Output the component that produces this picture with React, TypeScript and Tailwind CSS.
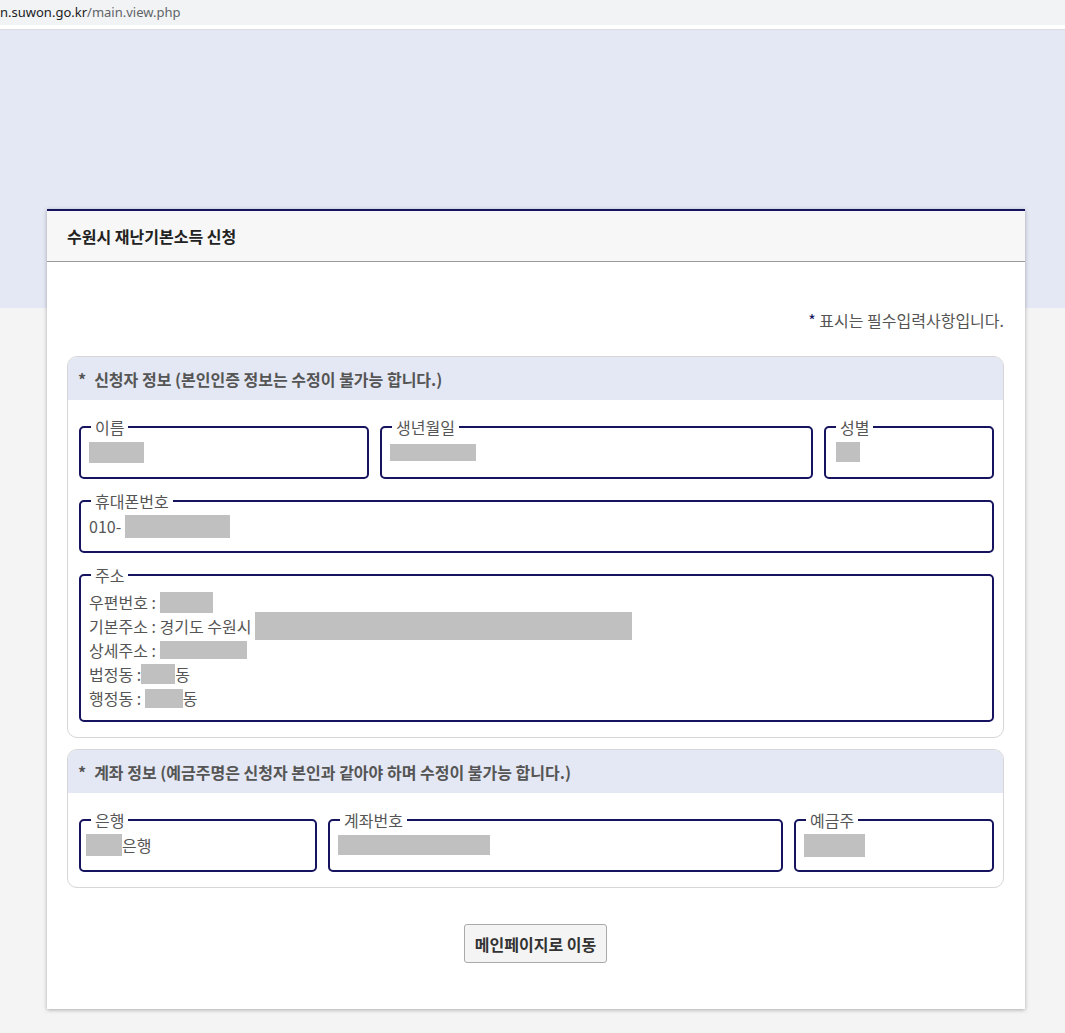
import type { ReactNode } from 'react';

const Blur = ({ w, h }: { w: number; h: number }) => (
  <span className="inline-block shrink-0 bg-[#c0c0c0] align-middle" style={{ width: w, height: h }} />
);

function Field({ label, children, className = '' }: { label: string; children: ReactNode; className?: string }) {
  return (
    <fieldset className={`rounded-[5px] border-2 border-[#16135f] px-[8px] ${className}`}>
      <legend className="ml-[2px] px-[4px] text-[16px] leading-[20px] text-[#555]">{label}</legend>
      {children}
    </fieldset>
  );
}

// single value line inside a field
const Value = ({ children }: { children: ReactNode }) => (
  <div className="flex h-[24px] items-center whitespace-pre text-[16px] text-[#555]">{children}</div>
);

function Section({ title, children }: { title: string; children: ReactNode }) {
  return (
    <div className="overflow-hidden rounded-[10px] border border-[#d6d6d6]">
      <div className="flex h-[43px] items-center bg-[#e4e8f4] pl-[10px] text-[16px] font-bold text-[#555]">
        <span className="mr-[8px]">*</span>
        {title}
      </div>
      <div className="pb-[15px] pl-[11px] pr-[9px] pt-[17px]">{children}</div>
    </div>
  );
}

export default function App() {
  return (
    <div className="min-h-screen bg-[#f4f4f4] font-['Noto_Sans_CJK_KR','Noto_Sans',sans-serif]">
      {/* Browser address bar */}
      <div className="flex h-[25px] items-center overflow-hidden bg-[#f1f3f4] font-['Noto_Sans',sans-serif] text-[13px]">
        <span className="text-[#202124]">n.suwon.go.kr</span>
        <span className="text-[#5f6368]">/main.view.php</span>
      </div>
      <div className="h-[4px] bg-white" />
      <div className="h-px bg-[#dadce0]" />

      {/* Top band */}
      <div className="h-[278px] bg-[#e4e8f4]" />

      {/* Card */}
      <div className="-mt-[99px] ml-[47px] w-[978px] border-t-2 border-[#16135f] bg-white pb-[46px] shadow-[0_1px_4px_rgba(0,0,0,0.3)]">
        <div className="flex h-[51px] items-center border-b border-[#999] bg-[#f7f7f7] px-[20px] text-[16px] font-bold text-[#222]">
          수원시 재난기본소득 신청
        </div>

        <div className="pl-[20px] pr-[21px] pt-[48px]">
          <p className="text-right text-[16px] leading-[20px] text-[#555]">
            <span className="text-[#16135f]">*</span> 표시는 필수입력사항입니다.
          </p>

          <div className="mt-[26px]">
            <Section title="신청자 정보 (본인인증 정보는 수정이 불가능 합니다.)">
              <div className="grid grid-cols-[290fr_433fr_170fr] gap-[11px]">
                <Field label="이름" className="pb-[13px] pt-[3px]">
                  <Value>
                    <Blur w={55} h={21} />
                  </Value>
                </Field>
                <Field label="생년월일" className="pb-[13px] pt-[3px]">
                  <Value>
                    <Blur w={86} h={17} />
                  </Value>
                </Field>
                <Field label="성별" className="pb-[13px] pt-[3px]">
                  <Value>
                    <span className="ml-[2px] flex">
                      <Blur w={24} h={20} />
                    </span>
                  </Value>
                </Field>
              </div>

              <Field label="휴대폰번호" className="mt-[12px] pb-[13px] pt-[3px]">
                <Value>
                  010-
                  <span className="ml-[4px] flex">
                    <Blur w={105} h={23} />
                  </span>
                </Value>
              </Field>

              <Field label="주소" className="mt-[12px] pb-[10px] pt-[5px]">
                <Value>
                  우편번호 : <Blur w={53} h={21} />
                </Value>
                <Value>
                  기본주소 : 경기도 수원시 <Blur w={377} h={28} />
                </Value>
                <Value>
                  상세주소 : <Blur w={87} h={18} />
                </Value>
                <Value>
                  법정동 :<Blur w={34} h={20} />동
                </Value>
                <Value>
                  행정동 : <Blur w={38} h={19} />동
                </Value>
              </Field>
            </Section>
          </div>

          <div className="mt-[11px]">
            <Section title="계좌 정보 (예금주명은 신청자 본인과 같아야 하며 수정이 불가능 합니다.)">
              <div className="grid grid-cols-[238fr_455fr_200fr] gap-[11px]">
                <Field label="은행" className="pb-[13px] pt-[3px]">
                  <Value>
                    <span className="-ml-[3px] flex">
                      <Blur w={36} h={22} />
                    </span>
                    은행
                  </Value>
                </Field>
                <Field label="계좌번호" className="pb-[13px] pt-[3px]">
                  <Value>
                    <Blur w={152} h={20} />
                  </Value>
                </Field>
                <Field label="예금주" className="pb-[13px] pt-[3px]">
                  <Value>
                    <Blur w={61} h={23} />
                  </Value>
                </Field>
              </div>
            </Section>
          </div>

          <div className="mt-[36px] flex justify-center">
            <button className="h-[39px] rounded-[3px] border border-[#aaa] bg-[#f4f4f4] px-[10px] text-[16px] font-bold text-[#333]">
              메인페이지로 이동
            </button>
          </div>
        </div>
      </div>
    </div>
  );
}
